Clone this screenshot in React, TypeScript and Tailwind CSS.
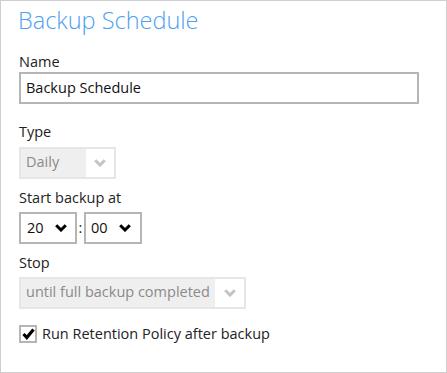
import React from "react";

const Chevron = ({ color }: { color: string }) => (
  <svg width="12" height="8" viewBox="0 0 12 8" className="block">
    <polyline points="1.2,1.2 6,6 10.8,1.2" fill="none" stroke={color} strokeWidth="3" strokeLinejoin="miter" />
  </svg>
);

export default function App() {
  return (
    <div
      className="w-[447px] h-[373px] border border-[#cfcfcf] bg-white pl-[18px] text-[14.5px] text-[#222]"
      style={{ fontFamily: '"Open Sans", "Noto Sans", sans-serif' }}
    >
      <div className="pt-[3px] h-[36px] text-[23.5px] leading-[32px] font-light text-[#4c9ff2] ml-[-1px]">
        Backup Schedule
      </div>
      <div className="mt-[15px] leading-[20px]">Name</div>
      <div className="w-[400px] h-[32px] border-2 border-[#b5b5b5] flex items-center pl-[5px] leading-[20px] text-[#111]">
        Backup Schedule
      </div>

      <div className="mt-[18px] leading-[20px]">Type</div>
      <div className="mt-[5px] w-[97px] h-[32px] border-2 border-[#e6e6e6] flex">
        <div className="flex-1 bg-[#efefef] flex items-center pl-[5px] text-[#8a8a8a] leading-[20px] pb-[2px]">Daily</div>
        <div className="w-[28px] bg-white flex items-center justify-center">
          <Chevron color="#c4c4c4" />
        </div>
      </div>

      <div className="mt-[9px] leading-[20px]">Start backup at</div>
      <div className="mt-[4px] flex items-center">
        <div className="w-[58px] h-[32px] border-2 border-[#b5b5b5] flex items-center justify-between pl-[6px] pr-[8px] text-[#111]">
          <span>20</span>
          <Chevron color="#000" />
        </div>
        <span className="w-[7px] text-center">:</span>
        <div className="w-[58px] h-[32px] border-2 border-[#b5b5b5] flex items-center justify-between pl-[5px] pr-[9px] text-[#111]">
          <span>00</span>
          <Chevron color="#000" />
        </div>
      </div>

      <div className="mt-[9px] leading-[20px]">Stop</div>
      <div className="mt-[4px] w-[227px] h-[32px] border-2 border-[#e6e6e6] flex">
        <div className="flex-1 bg-[#efefef] flex items-center pl-[5px] text-[#8a8a8a] whitespace-nowrap leading-[20px] pb-[2px]">
          until full backup completed
        </div>
        <div className="w-[29px] bg-white flex items-center justify-center">
          <Chevron color="#c4c4c4" />
        </div>
      </div>

      <div className="mt-[15px] flex items-center gap-[5px]">
        <div className="w-[18px] h-[18px] border-2 border-[#b5b5b5] bg-white flex items-center justify-center">
          <svg width="13" height="12" viewBox="0 0 13 12">
            <polyline points="1.5,6 4.8,9.5 11.5,1.5" fill="none" stroke="#000" strokeWidth="3.2" />
          </svg>
        </div>
        <span className="leading-[20px]">Run Retention Policy after backup</span>
      </div>
    </div>
  );
}
